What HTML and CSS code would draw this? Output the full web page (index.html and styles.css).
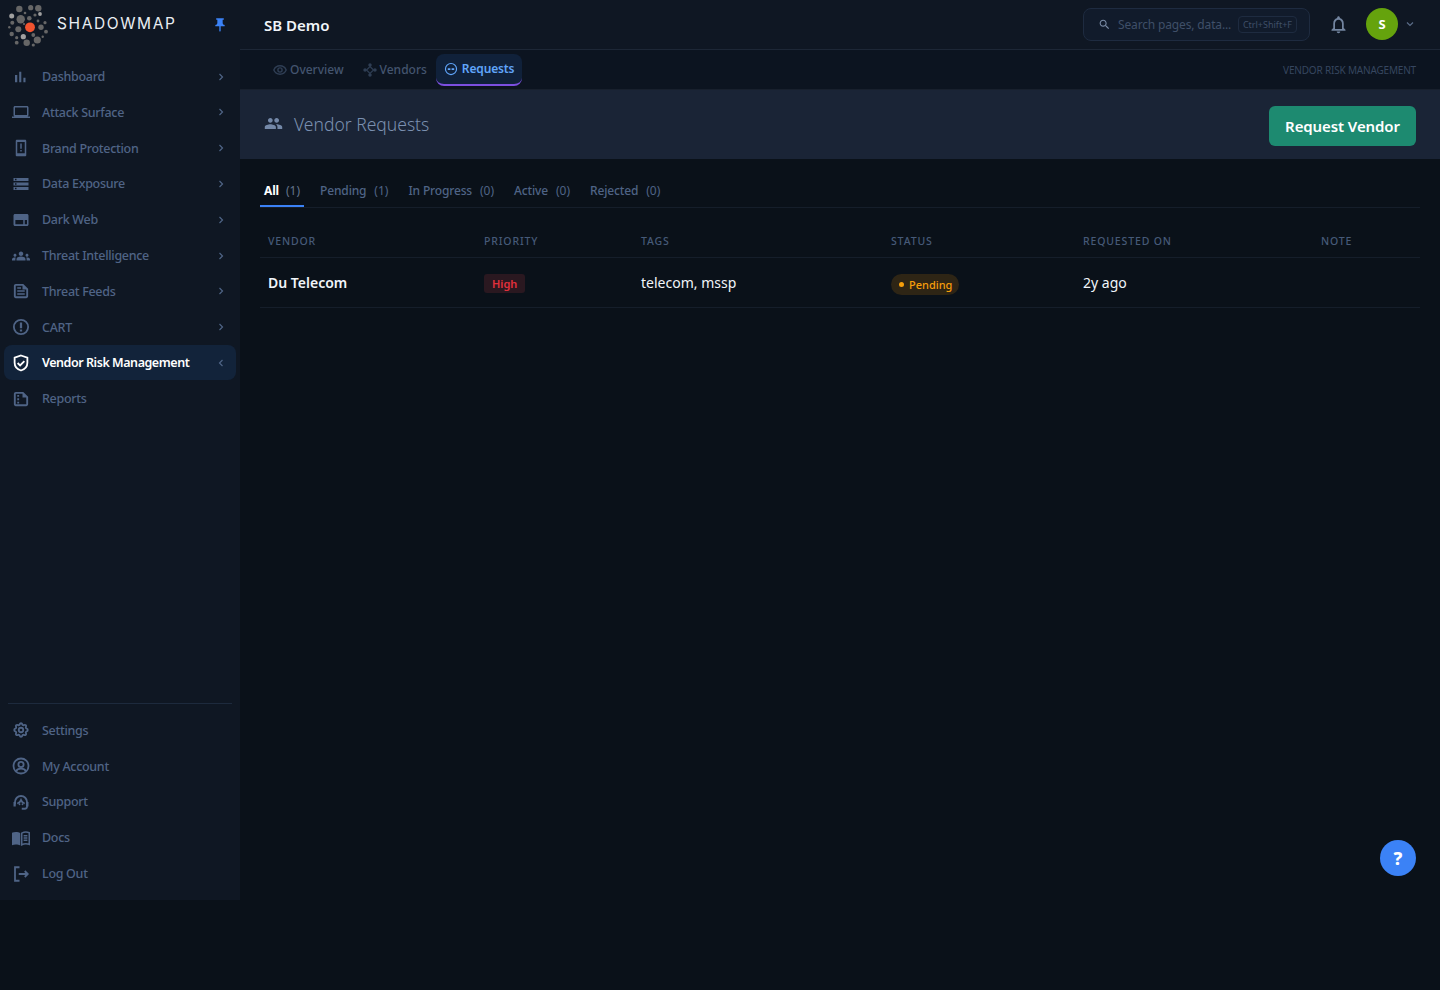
FILE: index.html
```html
<!DOCTYPE html>
<html>
<head>
    <meta charset="UTF-8" />
    <title>Vendor Requests</title>
    <link rel="stylesheet" href="styles.css">
</head>
<body>
<div class="app">
    <aside class="sidebar">
        <div class="brand">
            <svg class="logo" viewBox="0 0 50 50" width="50" height="50">
                <g fill="#666666">
                    <circle cx="20.7" cy="19.3" r="4.2"/><circle cx="19.3" cy="9" r="3.200"/><circle cx="38.3" cy="8.3" r="3.200"/>
                    <circle cx="30.7" cy="7.7" r="2.6"/><circle cx="41" cy="27.3" r="2.7"/><circle cx="37.3" cy="40" r="3.600"/>
                    <circle cx="26.7" cy="42.700" r="3.200"/><circle cx="18.3" cy="29.3" r="3"/><circle cx="12.3" cy="22.7" r="2"/>
                    <circle cx="11.7" cy="34" r="2.200"/><circle cx="16.7" cy="42.7" r="1.900"/><circle cx="46" cy="31.7" r="1.900"/>
                    <circle cx="45" cy="22.7" r="1.600"/><circle cx="29.3" cy="18.3" r="2.300"/><circle cx="35" cy="15" r="1.600"/>
                    <circle cx="33.3" cy="35" r="1.900"/><circle cx="33.3" cy="45" r="1.600"/><circle cx="16.7" cy="37.7" r="1.600"/>
                    <circle cx="42.7" cy="36.7" r="1.200"/><circle cx="9.3" cy="27.3" r="1.200"/><circle cx="25" cy="13" r="1.300"/>
                    <circle cx="38" cy="21" r="1.400"/><circle cx="24" cy="24" r="1.100"/>
                </g>
                <g fill="#a0a0a0">
                    <circle cx="11.7" cy="16" r="2.500"/><circle cx="23.3" cy="36.700" r="2.600"/><circle cx="40" cy="14" r="1.900"/>
                </g>
                <circle cx="30" cy="27.3" r="4.900" fill="#f1532f"/>
            </svg>
            <span class="brand-name">SHADOWMAP</span>
            <svg class="pin" viewBox="0 0 24 24" width="16" height="16"><path d="M16 9V4h1c.55 0 1-.45 1-1s-.45-1-1-1H7c-.55 0-1 .45-1 1s.45 1 1 1h1v5c0 1.660-1.340 3-3 3v2h5.970v7l1 1 1-1v-7H19v-2c-1.660 0-3-1.340-3-3z"/></svg>
        </div>

        <nav class="menu">
            <a class="menu-item">
                <svg class="menu-icon" viewBox="0 0 24 24"><path d="M5 9.200h3V19H5zM10.600 5h2.800v14h-2.800zm5.600 8H19v6h-2.800z" transform="translate(-1 0)"/></svg>
                <span>Dashboard</span><svg class="chev" viewBox="0 0 10 10"><path d="M3.500 2l3 3-3 3"/></svg>
            </a>
            <a class="menu-item">
                <svg class="menu-icon" viewBox="0 0 24 24"><path d="M20 18c1.100 0 1.990-.9 1.990-2L22 6c0-1.100-.9-2-2-2H4c-1.100 0-2 .9-2 2v10c0 1.100.9 2 2 2H0v2h24v-2h-4zM4 6h16v10H4V6z"/></svg>
                <span>Attack Surface</span><svg class="chev" viewBox="0 0 10 10"><path d="M3.500 2l3 3-3 3"/></svg>
            </a>
            <a class="menu-item">
                <svg class="menu-icon" viewBox="0 0 24 24"><path fill-rule="evenodd" d="M6.500 1h11C18.300 1 19 1.700 19 2.500v19c0 .8-.7 1.500-1.500 1.500h-11C5.700 23 5 22.300 5 21.500v-19C5 1.700 5.700 1 6.500 1zM7 4v15h10V4H7zm4 2h2v7h-2V6zm0 8.500h2v2h-2v-2z"/></svg>
                <span>Brand Protection</span><svg class="chev" viewBox="0 0 10 10"><path d="M3.500 2l3 3-3 3"/></svg>
            </a>
            <a class="menu-item">
                <svg class="menu-icon" viewBox="0 0 24 24"><path d="M2 20h20v-4H2v4zm2-3h2v2H4v-2zM2 4v4h20V4H2zm4 3H4V5h2v2zm-4 7h20v-4H2v4zm2-3h2v2H4v-2z"/></svg>
                <span>Data Exposure</span><svg class="chev" viewBox="0 0 10 10"><path d="M3.500 2l3 3-3 3"/></svg>
            </a>
            <a class="menu-item">
                <svg class="menu-icon" viewBox="0 0 24 24"><path fill-rule="evenodd" d="M4 4h16c1.100 0 2 .9 2 2v12c0 1.100-.9 2-2 2H4c-1.100 0-2-.9-2-2V6c0-1.100.9-2 2-2zm.500 8v5.500H15V12H4.500zm12.500 0v5.500h3V12h-3z"/></svg>
                <span>Dark Web</span><svg class="chev" viewBox="0 0 10 10"><path d="M3.500 2l3 3-3 3"/></svg>
            </a>
            <a class="menu-item">
                <svg class="menu-icon" viewBox="0 0 24 24"><path d="M12 12.750c1.630 0 3.070.39 4.240.9 1.080.48 1.760 1.560 1.760 2.730V18H6v-1.610c0-1.180.68-2.260 1.760-2.730 1.170-.52 2.610-.91 4.240-.91zM4 13c1.100 0 2-.9 2-2s-.9-2-2-2-2 .9-2 2 .9 2 2 2zm1.130 1.100c-.37-.06-.74-.1-1.130-.1-.99 0-1.930.21-2.780.58C.48 14.900 0 15.620 0 16.430V18h4.500v-1.610c0-.83.23-1.610.63-2.290zM20 13c1.100 0 2-.9 2-2s-.9-2-2-2-2 .9-2 2 .9 2 2 2zm4 3.430c0-.81-.48-1.530-1.220-1.850-.85-.37-1.790-.58-2.780-.58-.39 0-.76.04-1.130.1.4.68.63 1.460.63 2.290V18H24v-1.570zM12 6c1.660 0 3 1.340 3 3s-1.340 3-3 3-3-1.340-3-3 1.340-3 3-3z"/></svg>
                <span>Threat Intelligence</span><svg class="chev" viewBox="0 0 10 10"><path d="M3.500 2l3 3-3 3"/></svg>
            </a>
            <a class="menu-item">
                <svg class="menu-icon" viewBox="0 0 24 24"><path fill-rule="evenodd" d="M5 2.500h10l6.500 6.500v10c0 1.300-1.200 2.500-2.500 2.500H5c-1.300 0-2.500-1.200-2.500-2.500V5c0-1.300 1.200-2.500 2.500-2.500zM5 5v14h14v-9h-5V5H5zm2 2h5v2H7V7zm0 4h10v2H7v-2zm0 4h10v2H7v-2z"/></svg>
                <span>Threat Feeds</span><svg class="chev" viewBox="0 0 10 10"><path d="M3.500 2l3 3-3 3"/></svg>
            </a>
            <a class="menu-item">
                <svg class="menu-icon thick" viewBox="0 0 24 24"><circle class="line" cx="12" cy="12" r="9.500"/><path d="M10.500 6h3v7.500h-3zM10.500 15.300h3v2.700h-3z"/></svg>
                <span>CART</span><svg class="chev" viewBox="0 0 10 10"><path d="M3.500 2l3 3-3 3"/></svg>
            </a>
            <a class="menu-item active">
                <svg class="menu-icon thick" viewBox="0 0 24 24"><path class="line" d="M12 2l8.500 3v6.500c0 5-3.500 8.800-8.500 10.500-5-1.700-8.500-5.500-8.500-10.500V5z"/><path class="line" d="M7.500 12l3.300 3.300 5.700-5.800"/></svg>
                <span>Vendor Risk Management</span><svg class="chev" viewBox="0 0 10 10"><path d="M6.500 2l-3 3 3 3"/></svg>
            </a>
            <a class="menu-item">
                <svg class="menu-icon" viewBox="0 0 24 24"><path fill-rule="evenodd" d="M5 2.500h10l6.500 6.500v10c0 1.300-1.200 2.500-2.500 2.500H5c-1.300 0-2.500-1.200-2.500-2.500V5c0-1.300 1.200-2.500 2.500-2.500zM5 5v14h14v-9h-5V5H5zm2 1.500h2.500V9H7V6.500zm0 4.500h2.500v2.500H7V11zm0 4.500h2.500V18H7v-2.500z"/></svg>
                <span>Reports</span>
            </a>
        </nav>

        <nav class="menu-bottom">
            <a class="menu-item">
                <svg class="menu-icon thick" viewBox="0 0 24 24"><path class="line" d="M10.325 4.317c.426-1.756 2.924-1.756 3.350 0a1.724 1.724 0 002.573 1.066c1.543-.94 3.310.826 2.370 2.370a1.724 1.724 0 001.065 2.572c1.756.426 1.756 2.924 0 3.350a1.724 1.724 0 00-1.066 2.573c.94 1.543-.826 3.310-2.370 2.370a1.724 1.724 0 00-2.572 1.065c-.426 1.756-2.924 1.756-3.350 0a1.724 1.724 0 00-2.573-1.066c-1.543.94-3.310-.826-2.370-2.370a1.724 1.724 0 00-1.065-2.572c-1.756-.426-1.756-2.924 0-3.350a1.724 1.724 0 001.066-2.573c-.94-1.543.826-3.310 2.370-2.370.996.608 2.296.07 2.572-1.065z"/><circle class="line" cx="12" cy="12" r="3"/></svg>
                <span>Settings</span>
            </a>
            <a class="menu-item">
                <svg class="menu-icon thick" viewBox="0 0 24 24"><circle class="line" cx="12" cy="12" r="10"/><circle class="line" cx="12" cy="10" r="3.500"/><path class="line" d="M5.500 19c1-2.500 3.500-3.500 6.500-3.500s5.500 1 6.500 3.500"/></svg>
                <span>My Account</span>
            </a>
            <a class="menu-item">
                <svg class="menu-icon thick" viewBox="0 0 24 24"><path class="line" d="M4 15v-3a8 8 0 0116 0v6c0 2-1 3-3 3h-4"/><path d="M2 12h3v6H2zM19 12h3v6h-3z"/><path class="line" d="M7 14c2-.5 4-2 5-4.500 1 2.500 3 4 5 4.500"/><circle cx="10" cy="15" r="1.200"/><circle cx="14" cy="15" r="1.200"/></svg>
                <span>Support</span>
            </a>
            <a class="menu-item">
                <svg class="menu-icon" viewBox="0 0 24 24"><path d="M0 5c3-1.200 8-1.400 11 .5V22c-3-1.800-8-1.700-11-.5z"/><path class="line" d="M13 5.500c3-1.500 7.500-1.500 10-.5v15.500c-2.500-.9-7-1-10 .5zM15.500 9h5M15.500 12h5M15.500 15h5"/></svg>
                <span>Docs</span>
            </a>
            <a class="menu-item">
                <svg class="menu-icon thick" viewBox="0 0 24 24"><path class="line" d="M10 3H4v18h6M9 12h12M17 8l4 4-4 4"/></svg>
                <span>Log Out</span>
            </a>
        </nav>
    </aside>

    <main class="main">
        <header class="topbar">
            <div class="org">SB Demo</div>
            <div class="search">
                <svg class="search-icon" viewBox="0 0 24 24"><path d="M15.500 14h-.79l-.28-.27C15.410 12.590 16 11.110 16 9.500 16 5.910 13.090 3 9.500 3S3 5.910 3 9.500 5.910 16 9.500 16c1.610 0 3.090-.59 4.230-1.570l.27.28v.79l5 4.990L20.490 19l-4.990-5zm-6 0C7.010 14 5 11.990 5 9.500S7.010 5 9.500 5 14 7.010 14 9.500 11.990 14 9.500 14z"/></svg>
                <span class="search-text">Search pages, data...</span>
                <span class="kbd">Ctrl+Shift+F</span>
            </div>
            <svg class="bell" viewBox="0 0 24 24"><path d="M12 22c1.100 0 2-.9 2-2h-4c0 1.100.9 2 2 2zm6-6v-5c0-3.070-1.630-5.640-4.500-6.320V4c0-.83-.67-1.500-1.500-1.500s-1.500.67-1.500 1.500v.68C7.640 5.360 6 7.920 6 11v5l-2 2v1h16v-1l-2-2zm-2 1H8v-6c0-2.480 1.510-4.500 4-4.500s4 2.020 4 4.500v6z"/></svg>
            <div class="avatar">S</div>
            <svg class="caret" viewBox="0 0 10 10"><path d="M2 3.500l3 3 3-3"/></svg>
        </header>

        <div class="subnav">
            <a class="subnav-item">
                <svg viewBox="2 2 20 20"><path d="M12 6c3.800 0 7.200 2.100 8.800 6-1.600 3.900-5 6-8.800 6s-7.200-2.100-8.800-6C4.800 8.100 8.200 6 12 6z" class="line"/><circle cx="12" cy="12" r="3" class="line"/></svg>
                Overview
            </a>
            <a class="subnav-item">
                <svg viewBox="0 0 24 24"><path class="line" d="M12 6l6 6-6 6-6-6z"/><circle cx="12" cy="3.500" r="3"/><circle cx="12" cy="20.500" r="3"/><circle cx="3.500" cy="12" r="3"/><circle cx="20.500" cy="12" r="3"/></svg>
                Vendors
            </a>
            <a class="subnav-item current">
                <svg viewBox="0 0 24 24"><circle class="line" cx="12" cy="12" r="9.500"/><path d="M6.500 10.500h4.500v3H6.500zM13 10.500h4.500v3H13z"/></svg>
                Requests
            </a>
            <div class="crumb">VENDOR RISK MANAGEMENT</div>
        </div>

        <div class="page-head">
            <svg class="head-icon" viewBox="0 0 24 24"><path d="M16 11c1.660 0 2.990-1.340 2.990-3S17.660 5 16 5c-1.660 0-3 1.340-3 3s1.340 3 3 3zm-8 0c1.660 0 2.990-1.340 2.990-3S9.660 5 8 5C6.340 5 5 6.340 5 8s1.340 3 3 3zm0 2c-2.330 0-7 1.170-7 3.500V19h14v-2.500c0-2.330-4.670-3.500-7-3.500zm8 0c-.29 0-.62.02-.97.05 1.160.84 1.970 1.970 1.970 3.450V19h6v-2.500c0-2.330-4.670-3.500-7-3.500z"/></svg>
            <h1>Vendor Requests</h1>
            <button class="btn-request">Request Vendor</button>
        </div>

        <div class="content">
            <div class="tabs">
                <a class="tab selected">All <em>(1)</em></a>
                <a class="tab">Pending <em>(1)</em></a>
                <a class="tab">In Progress <em>(0)</em></a>
                <a class="tab">Active <em>(0)</em></a>
                <a class="tab">Rejected <em>(0)</em></a>
            </div>
            <table class="requests">
                <thead>
                    <tr>
                        <th class="c-vendor">VENDOR</th>
                        <th class="c-priority">PRIORITY</th>
                        <th class="c-tags">TAGS</th>
                        <th class="c-status">STATUS</th>
                        <th class="c-date">REQUESTED ON</th>
                        <th>NOTE</th>
                    </tr>
                </thead>
                <tbody>
                    <tr>
                        <td class="vendor-name">Du Telecom</td>
                        <td><span class="badge-high">High</span></td>
                        <td>telecom, mssp</td>
                        <td><span class="badge-pending"><i></i>Pending</span></td>
                        <td>2y ago</td>
                        <td></td>
                    </tr>
                </tbody>
            </table>
        </div>
    </main>
</div>
<button class="help">?</button>
</body>
</html>
```

FILE: styles.css
```css
* {
    box-sizing: border-box;
}
html, body {
    margin: 0;
    height: 100%;
}
body {
    background-color: #0a1119;
    color: #fff;
    font-family: "Noto Sans", "Open Sans", sans-serif;
    font-size: 13px;
    overflow: hidden;
}
.app {
    display: flex;
    height: 990px;
}
.line {
    fill: none;
    stroke: currentColor;
    stroke-width: 2;
}
.thick .line {
    stroke-width: 2.4;
}

/* sidebar */
.sidebar {
    width: 240px;
    height: 900px;
    flex: none;
    display: flex;
    flex-direction: column;
    background-color: #0f1723;
}
.brand {
    height: 59.1px;
    display: flex;
    align-items: flex-start;
    position: relative;
    flex: none;
}
.logo {
    flex: none;
}
.brand-name {
    margin: 14px 0 0 7px;
    font-family: "Inter", sans-serif;
    font-size: 15.5px;
    letter-spacing: 1.6px;
    line-height: 20px;
    color: #e9edf2;
}
.pin {
    position: absolute;
    left: 212px;
    top: 17px;
    fill: #3b82f6;
}
.menu {
    display: flex;
    flex-direction: column;
    gap: 0.8px;
    padding: 0 4px;
    flex: 1;
}
.menu-bottom {
    display: flex;
    flex-direction: column;
    gap: 0.8px;
    margin: 0 8px;
    padding: 9.3px 0 9px;
    border-top: 1px solid #1d2a3d;
}
.menu-bottom .menu-item {
    margin: 0 -4px;
}
.menu-item {
    height: 35px;
    display: flex;
    align-items: center;
    padding-left: 8px;
    border-radius: 8px;
    color: #4f6486;
    font-size: 12.5px;
    letter-spacing: -0.3px;
    font-weight: 500;
    position: relative;
}
.menu-icon {
    width: 18px;
    height: 18px;
    flex: none;
    margin-right: 12px;
    fill: currentColor;
}
.chev {
    position: absolute;
    left: 212px;
    top: 12.5px;
    width: 10px;
    height: 10px;
    fill: none;
    stroke: #4f6486;
    stroke-width: 1.2;
}
.menu-item.active {
    background-color: #12233a;
    color: #fff;
    font-weight: 600;
    letter-spacing: -0.45px;
}

/* top bar */
.main {
    flex: 1;
    min-width: 0;
    display: flex;
    flex-direction: column;
}
.topbar {
    height: 50px;
    flex: none;
    display: flex;
    align-items: center;
    padding: 0 25px 1px 24px;
    background-color: #0f1723;
    border-bottom: 1px solid #1d2736;
}
.org {
    flex: 1;
    margin-top: 2px;
    font-size: 15px;
    font-weight: 600;
    color: #f1f5f9;
}
.search {
    width: 227px;
    height: 33px;
    display: flex;
    align-items: center;
    padding: 0 12px 0 14px;
    background-color: #111b2b;
    border: 1px solid #1e2b40;
    border-radius: 8px;
}
.search-icon {
    width: 13px;
    height: 13px;
    flex: none;
    fill: #7b8ca6;
    margin-right: 7px;
}
.search-text {
    flex: 1;
    font-size: 12px;
    letter-spacing: -0.15px;
    color: #3f4f68;
    white-space: nowrap;
}
.kbd {
    font-size: 9px;
    color: #3f4f68;
    border: 1px solid #1e2b40;
    border-radius: 4px;
    padding: 2px 4px;
    line-height: 11px;
    white-space: nowrap;
}
.bell {
    width: 21px;
    height: 21px;
    margin-left: 18px;
    fill: #7385a0;
}
.avatar {
    width: 32px;
    height: 32px;
    margin-left: 17px;
    border-radius: 50%;
    background-color: #65a30d;
    text-align: center;
    line-height: 32px;
    font-size: 13px;
    font-weight: 700;
}
.caret {
    width: 10px;
    height: 10px;
    margin-left: 7px;
    fill: none;
    stroke: #5b6d88;
    stroke-width: 1.2;
}

/* sub navigation */
.subnav {
    height: 39px;
    flex: none;
    display: flex;
    align-items: center;
    padding: 0 24px;
    background-color: #0c1420;
    gap: 1px;
}
.subnav-item {
    height: 32px;
    display: flex;
    align-items: center;
    padding: 0 9px;
    font-size: 12px;
    font-weight: 500;
    color: #44556f;
}
.subnav-item svg {
    width: 14px;
    height: 14px;
    margin-right: 3px;
    fill: #2f3e54;
    color: #2f3e54;
}
.subnav-item.current {
    margin-left: -1px;
    padding: 0 8px;
    background-color: #10213a;
    color: #60a5fa;
    font-weight: 600;
    letter-spacing: -0.15px;
    border-radius: 8px;
    border-bottom: 2px solid #7c4fe0;
}
.subnav-item.current svg {
    margin-right: 4px;
    fill: #60a5fa;
    color: #60a5fa;
}
.crumb {
    margin-left: auto;
    font-size: 10px;
    letter-spacing: -0.18px;
    color: #36465f;
}

/* page header */
.page-head {
    height: 70px;
    flex: none;
    display: flex;
    align-items: center;
    padding: 0 24px;
    background-color: #1a2436;
    border-top: 1px solid #18202d;
}
.head-icon {
    width: 19px;
    height: 19px;
    margin: 0 11px 3px 0;
    fill: #7488a8;
}
.page-head h1 {
    flex: 1;
    margin: 0 0 2px;
    font-size: 17.5px;
    font-weight: 300;
    color: #7b90b0;
}
.btn-request {
    width: 147px;
    height: 40px;
    border: none;
    border-radius: 6px;
    background-color: #1d8a70;
    color: #fff;
    font-family: inherit;
    font-size: 15px;
    font-weight: 600;
    letter-spacing: -0.1px;
    margin-top: 3px;
}

/* tabs + table */
.content {
    padding: 14px 20px 0;
}
.tabs {
    display: flex;
    gap: 8px;
    height: 35px;
    border-bottom: 1px solid #151e2a;
}
.tab {
    height: 34px;
    padding: 9px 4px 0;
    font-size: 12px;
    letter-spacing: -0.15px;
    font-weight: 500;
    color: #4f6486;
    margin-right: 4px;
    white-space: nowrap;
}
.tab em {
    font-style: normal;
    font-weight: 400;
    margin-left: 5px;
    font-size: 12px;
    letter-spacing: 0;
}
.tab.selected {
    color: #fff;
    font-weight: 700;
    border-bottom: 2px solid #3b82f6;
}
.tab.selected em {
    margin-left: 4px;
    font-weight: 400;
    color: #64748b;
}
.requests {
    width: 1160px;
    table-layout: fixed;
    border-collapse: collapse;
    margin-top: 16px;
}
.requests th {
    height: 33px;
    padding: 1px 8px 0;
    text-align: left;
    font-size: 10.5px;
    font-weight: 500;
    letter-spacing: 0.85px;
    color: #465a78;
    border-bottom: 1px solid #151e2a;
}
.c-vendor { width: 216px; }
.c-priority { width: 157px; }
.c-tags { width: 250px; }
.c-status { width: 192px; }
.c-date { width: 238px; }
.requests td {
    height: 50px;
    padding: 0 8px;
    font-size: 14px;
    color: #f1f5f9;
    border-bottom: 1px solid #151e2a;
}
.requests td.vendor-name {
    font-weight: 600;
}
.badge-high {
    display: inline-block;
    padding: 0 8px;
    height: 19px;
    line-height: 20px;
    border-radius: 3px;
    font-size: 11px;
    font-weight: 600;
    color: #e1303c;
    background-color: #2a1820;
    vertical-align: -2px;
}
.badge-pending {
    display: inline-flex;
    align-items: center;
    padding: 0 7px 0 8px;
    height: 21px;
    border-radius: 11px;
    font-size: 11px;
    font-weight: 500;
    color: #f59e0b;
    background-color: #2e2515;
    vertical-align: -2px;
}
.badge-pending i {
    width: 5px;
    height: 5px;
    border-radius: 50%;
    background-color: #f59e0b;
    margin-right: 5px;
}
.help {
    position: fixed;
    left: 1380px;
    top: 840px;
    width: 36px;
    height: 36px;
    border: none;
    border-radius: 50%;
    background-color: #3b82f6;
    color: #fff;
    font-family: inherit;
    font-size: 18px;
    font-weight: 800;
    line-height: 36px;
    padding: 0;
}
```
